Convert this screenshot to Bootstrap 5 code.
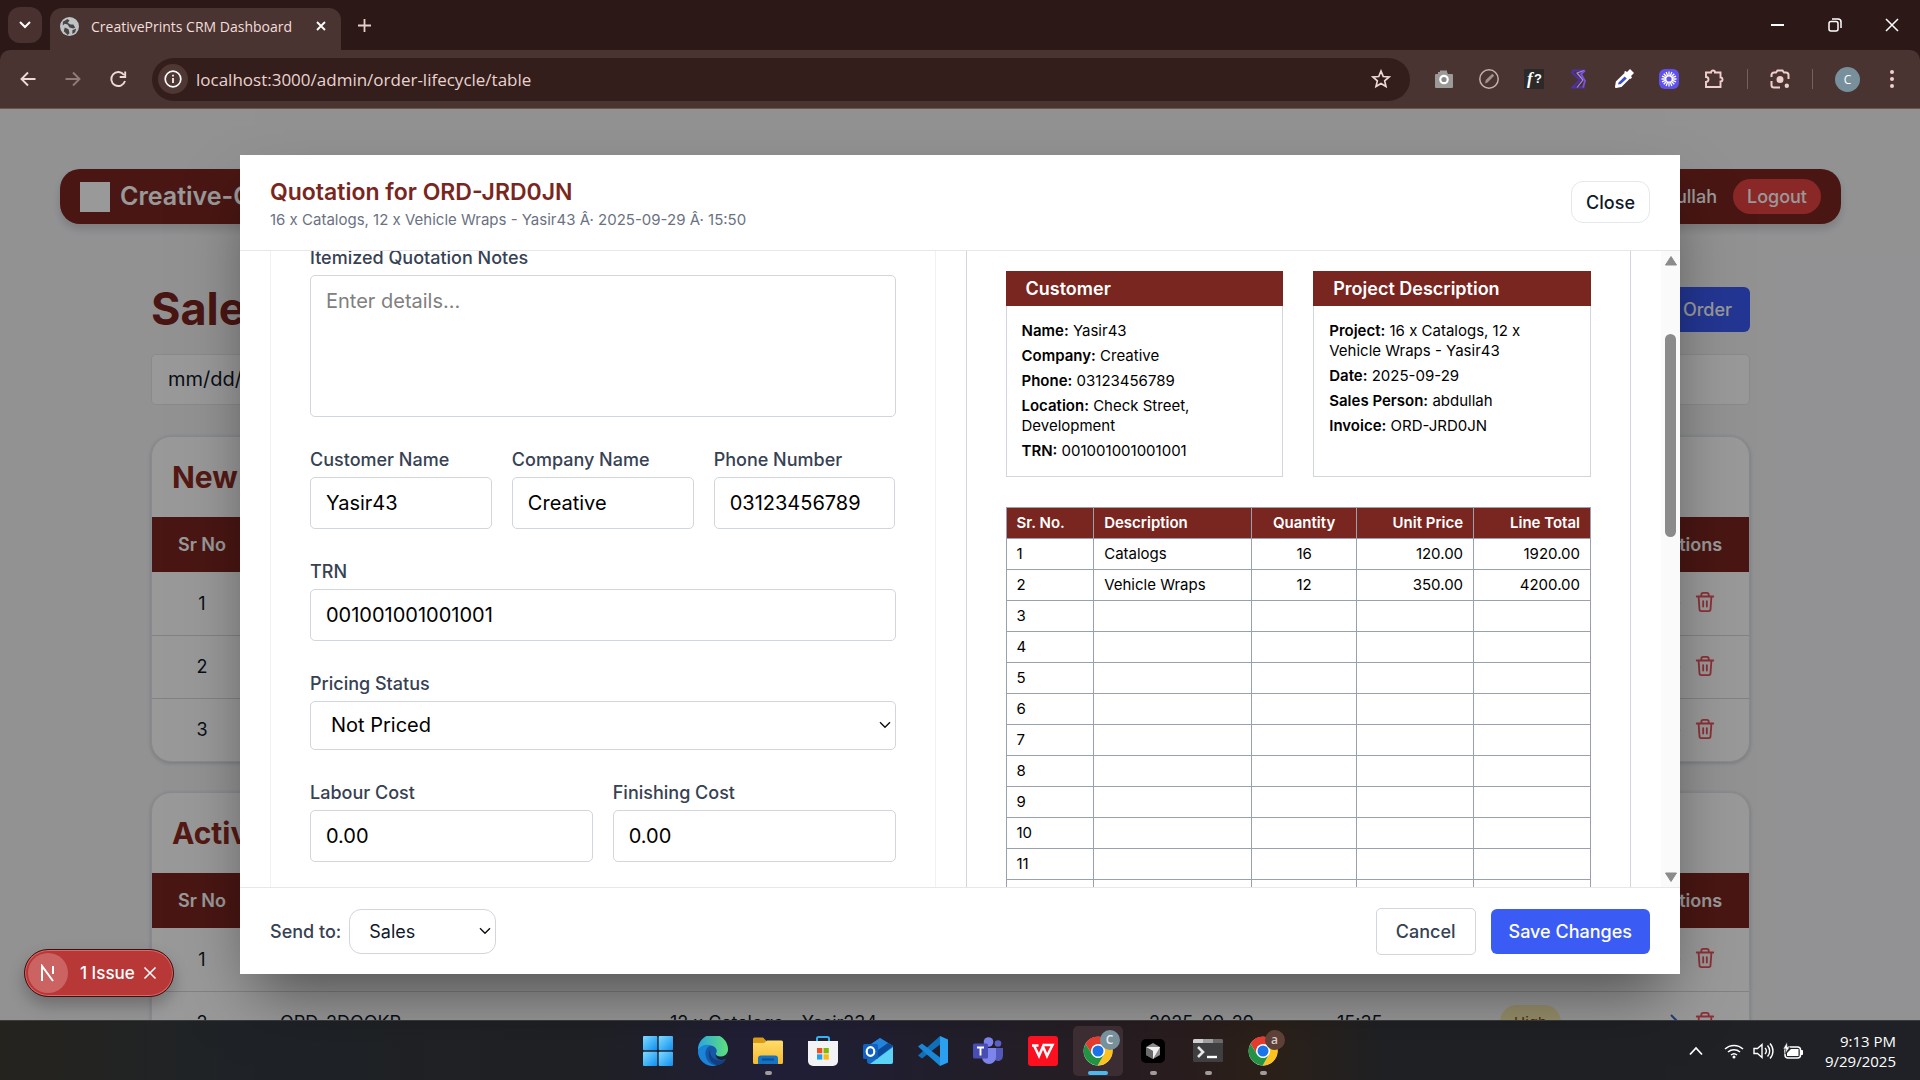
<!DOCTYPE html>
<html lang="en">
<head>
<meta charset="utf-8">
<meta name="viewport" content="width=device-width, initial-scale=1">
<title>CreativePrints CRM Dashboard</title>
<link href="https://cdn.jsdelivr.net/npm/bootstrap@5.3.0/dist/css/bootstrap.min.css" rel="stylesheet">
<style>
:root{--brand:#7a2620;--blue:#3b5bf5;--ui:"Open Sans","Noto Sans",sans-serif}
html,body{height:100%}
body{font-family:Inter,"Liberation Sans",sans-serif;font-size:18px;line-height:25px;color:#101828;overflow:hidden;background:#202124}
button,input,select,textarea{font-family:inherit}
svg{display:block;flex:none}
/* browser window */
.chrome{font-family:var(--ui);color:#f3dedb;background:#2c1817;flex:none}
.strip{height:50px;padding-left:8px}
.tablist-btn{width:34px;height:36px;border-radius:12px;background:#48312f;border:0;color:#fff;margin-right:8px;place-items:center}
.tab-item{width:291px;height:42px;border-radius:12px 12px 0 0;background:#4a3431;font-size:14px;padding:0 15px 6px 10px}
.bare{border:0;background:none;padding:0;color:inherit}
.win-btn{width:57px;height:50px;display:grid;place-items:center;color:#fff}
.toolbar{height:59px;background:#4a3431;border-bottom:1px solid #6b5350;border-radius:10px 10px 0 0;padding:0 20px 0 18px}
.nav-set{gap:25px}
.ext-set{gap:25px}
.side-set{gap:22px;margin:0 20px 0 23px}
.omni{height:43px;border-radius:22px;background:#341e1b;padding:0 19px 0 6px}
.omni input{border:0;background:none;color:#e9d3d0;font-size:17px;outline:0;min-width:0;padding:0}
.info-dot{width:30px;height:30px;border-radius:50%;background:#4f3734;place-items:center}
.vbar{width:1px;height:20px;background:#7a605c}
.avatar-c{width:25px;height:25px;border-radius:50%;background:#78909c;font-size:12px;line-height:25px;text-align:center;color:#fff}
/* dashboard */
.viewport{min-height:0;background:#f3f4f6;overflow:hidden;padding:60px 79px 0 60px}
.brandbar{height:55px;border-radius:20px;background:var(--brand);color:#fff;padding:0 20px;box-shadow:0 5px 8px rgba(0,0,0,.15);margin-bottom:60px}
.logo-box{width:30px;height:30px;background:#fff;margin-right:10px}
.brand-name{font-size:25px;font-weight:600}
.logout{height:35px;border:0;border-radius:18px;background:#e64242;color:#fff;font-size:18px;font-weight:500;padding:0 14px}
.board{padding:0 91px}
.board h1{font-size:45px;line-height:50px;font-weight:700;color:var(--brand);margin:0}
.title-row{margin-bottom:20px}
.filter-row{gap:20px;margin-bottom:31px}
.btn-blue{background:var(--blue);color:#fff;border:0;border-radius:6px;height:45px;padding:0 18px;font-weight:500;font-size:18px}
.filter{flex:1 1 0;height:51px;border:1px solid #e5e7eb;border-radius:5px;background:#fff;font-size:20px;padding:0 16px;color:#101828}
.list-card{background:#fff;border-radius:20px;border:1px solid #e5e7eb;box-shadow:0 1px 4px rgba(16,24,40,.2);overflow:hidden;margin-bottom:30px}
.list-card h2{font-size:30px;line-height:40px;font-weight:700;color:#8d2a22;margin:0;padding:20px}
.grid-t{width:100%;table-layout:fixed}
.grid-t th{height:55px;background:var(--brand);color:#fff;font-weight:600;text-align:left;padding:0 28px}
.grid-t td{height:63px;border-bottom:1px solid #d6d9df;padding:0 28px}
.grid-t tr:last-child td{border-bottom:0}
.grid-t .mid{text-align:center;padding:0}
.c1{width:100px}.c2{width:390px}.c3{width:479px}.c4{width:188px}.c5{width:163px}.c7{width:120px}
.prio{display:inline-block;background:#fef0b5;color:#894b00;border-radius:17px;padding:5px 14px;font-size:15px}
/* quotation dialog */
.shade{position:absolute;top:109px;right:0;bottom:60px;left:0;background:rgba(0,0,0,.4)}
.dialog{width:75%;height:90%;background:#fff;box-shadow:0 31px 62px -15px rgba(0,0,0,.5)}
.dlg-head{flex:none;padding:20px 30px;border-bottom:1px solid #e5e7eb}
.dlg-head h3{font-size:23px;line-height:35px;font-weight:600;color:var(--brand);margin:0}
.dlg-head p{font-size:15px;line-height:20px;color:#6a7282;margin:0}
.btn-line{height:42px;background:#fff;border:1px solid #e5e7eb;border-radius:12px;padding:0 14px;font-weight:500;color:#101828}
.dlg-body{min-height:0}
.scroll-area{overflow:hidden;padding:30px;min-width:0}
.pane{border:1px solid #f0f1f3;padding:39px;min-width:0}
.preview{border-color:#d1d5dc}
.pair{gap:30px}
.field label,.send label{font-weight:500;color:#364153;font-size:18px}
.field label{display:block;margin-bottom:5px}
.field{margin-bottom:30px}
.ctl{display:block;width:100%;height:52px;border:1px solid #d1d5dc;border-radius:5px;padding:0 15px;font-size:20px;color:#000;background:#fff}
textarea.ctl{height:142px;padding:10px 15px;line-height:30px;resize:none}
textarea.ctl::placeholder{color:#808080}
.picker{appearance:none;background:#fff url("data:image/svg+xml,%3Csvg xmlns='http://www.w3.org/2000/svg' width='12' height='8' fill='none' stroke='%23111' stroke-width='1.4'%3E%3Cpath d='M1 1.2l5 5 5-5'/%3E%3C/svg%3E") no-repeat right 4px center}
select.ctl{height:49px;padding:0 20px}
.trio{gap:20px}
.trio>*{flex:1 1 0;min-width:0}
.form-top{height:114px}
.quote-head{height:140px}
.info-box{flex:1 1 0;border:1px solid #d1d5dc;font-size:15px;line-height:20px;color:#000}
.info-box h4{background:var(--brand);color:#fff;font-size:18px;line-height:35px;font-weight:600;margin:-1px -1px 0;padding:0 20px}
.info-box div{padding:15px}
.info-box p{margin:0 0 5px}
.info-box p:last-child{margin:0}
.info-box b,.lines th{font-weight:600}
.lines{width:100%;table-layout:fixed;border-collapse:collapse;font-size:15px;line-height:20px;color:#000;margin-top:30px}
.lines th,.lines td{border:1px solid #99a1af;padding:5px 10px;height:31px}
.lines th{background:var(--brand);color:#fff}
.sbar{flex:none;width:19px;background:#fafafa;padding:4px 0;color:#8b8b8b}
.thumb{width:11px;height:203px;border-radius:6px;background:#8b8b8b;margin-top:67px}
.dlg-foot{flex:none;height:87px;border-top:1px solid #e5e7eb;padding:0 30px}
.send select{width:147px;height:45px;border:1px solid #d1d5dc;border-radius:12px;padding:0 19px;font-size:18px;color:#101828}
.btn-cancel{height:47px;border-radius:5px;border-color:#d1d5dc;padding:0 19px;color:#364153;margin-right:15px}
/* dev overlay */
.issue{position:absolute;left:24px;bottom:83px;height:48px;width:150px;border-radius:24px;background:#b83737;border:1px solid #3a1212;box-shadow:inset 0 0 0 1px #d66,0 8px 16px rgba(0,0,0,.25);color:#fff;font-size:17px;font-weight:500;padding:0 16px 0 3px}
.n-dot{width:40px;height:40px;border-radius:50%;background:#cb6363;place-items:center}
/* taskbar */
.taskbar{flex:none;height:60px;font-family:var(--ui);color:#fff;background:linear-gradient(90deg,#25231e 0,#1f2327 12%,#202124 30%,#201f38 40%,#221f2b 50%,#2a1d1e 62%,#2c2119 66%,#202124 72%,#202126 100%);border-top:1px solid #3a3a3c}
.apps{gap:5px}
.app{width:50px;height:50px;border:0;background:none;border-radius:5px;position:relative;display:grid;place-items:center;padding:0}
.app.on{background:#3c2d33}
.app.run::after{content:"";position:absolute;bottom:1px;left:50%;width:7px;height:4px;margin-left:-3px;border-radius:2px;background:#a09c9c}
.app.on::after{width:20px;margin-left:-10px;background:#4cb8f0}
.who{position:absolute;top:4px;right:3px;width:20px;height:20px;border-radius:50%;background:#78909c;color:#e8edf0;font-size:12px;line-height:20px;font-weight:600;text-align:center}
.who.brown{background:#5d4037;color:#d7ccc8}
.tray{font-size:15px;line-height:20px;width:240px;padding:0 24px 0 9px;gap:9px}
</style>
<script src="https://cdn.jsdelivr.net/npm/bootstrap@5.3.0/dist/js/bootstrap.bundle.min.js"></script>
</head>
<body class="d-flex flex-column position-relative">
<svg width="0" height="0" class="position-absolute">
<defs>
<symbol id="trash" viewBox="0 0 24 24"><path d="M3 6h18M5 6l1 14a2 2 0 0 0 2 2h8a2 2 0 0 0 2-2l1-14M8 6V4a2 2 0 0 1 2-2h4a2 2 0 0 1 2 2v2M10 11v6M14 11v6" fill="none" stroke="#e8505a" stroke-width="2" stroke-linecap="round" stroke-linejoin="round"/></symbol>
<symbol id="go" viewBox="0 0 24 24"><path d="M9 4l8 8-8 8" fill="none" stroke="#3467c8" stroke-width="2"/></symbol>
<symbol id="chrome" viewBox="0 0 48 48"><circle cx="24" cy="24" r="23" fill="#fff"/><path d="M24 13h20.600A23 23 0 0 0 4.100 12.500L14.500 29.500A11 11 0 0 1 24 13z" fill="#e33b2e"/><path d="M33.500 29.500L23.500 47A23 23 0 0 0 44.600 13H24a11 11 0 0 1 9.500 16.500z" fill="#fcc31e"/><path d="M14.500 29.500L4.100 12.500A23 23 0 0 0 23.500 47l10-17.500a11 11 0 0 1-19 0z" fill="#229342"/><circle cx="24" cy="24" r="10.800" fill="#fff"/><circle cx="24" cy="24" r="8.800" fill="#1a73e8"/></symbol>
<linearGradient id="gWin" x1="0" y1="0" x2="1" y2="1"><stop offset="0" stop-color="#7fdcff"/><stop offset="1" stop-color="#0f8ef0"/></linearGradient>
<linearGradient id="gEdge" x1="0" y1="0" x2="1" y2="0"><stop offset="0" stop-color="#2aa5e0"/><stop offset="1" stop-color="#5fe07a"/></linearGradient>
<linearGradient id="gFold" x1="0" y1="0" x2="0" y2="1"><stop offset="0" stop-color="#ffdc6a"/><stop offset="1" stop-color="#f5b92c"/></linearGradient>
</defs>
</svg>

<header class="chrome">
  <div class="strip d-flex align-items-center">
    <button class="tablist-btn d-grid" aria-label="Search tabs"><svg width="12" height="8" fill="none" stroke="currentColor" stroke-width="2"><path d="M1 1l5 5 5-5"/></svg></button>
    <div class="tab-item d-flex align-items-center align-self-end gap-2">
      <svg width="19" height="19" viewBox="0 0 20 20"><circle cx="10" cy="10" r="10" fill="#bfc3c6"/><path d="M3 5l5-3 2 2-2 2 3 2 3 0 2 3-2 1-4-1-2-3-3-1-2 2zM5 11l4 2 1 4-2 2-4-4zM13 14l4-2-1 4-3 2z" fill="#4a4545"/></svg>
      <span class="flex-grow-1 text-nowrap ms-1">CreativePrints CRM Dashboard</span>
      <button class="bare" aria-label="Close tab"><svg width="10" height="10" stroke="#fff" stroke-width="1.800"><path d="M1 1l8 8M9 1l-8 8"/></svg></button>
    </div>
    <button class="bare ms-3" aria-label="New tab"><svg width="15" height="15" stroke="#e8cfcb" stroke-width="1.800"><path d="M7.500 1v13M1 7.500h13"/></svg></button>
    <div class="d-flex ms-auto">
      <button class="bare win-btn" aria-label="Minimise"><svg width="13" height="2" stroke="#fff" stroke-width="2"><path d="M0 1h13"/></svg></button>
      <button class="bare win-btn" aria-label="Restore"><svg width="14" height="14" fill="none" stroke="#fff" stroke-width="1.500"><rect x="1" y="3.500" width="9" height="9.500" rx="2"/><path d="M4 1h6a3 3 0 0 1 3 3v6"/></svg></button>
      <button class="bare win-btn" aria-label="Close window"><svg width="14" height="14" stroke="#fff" stroke-width="1.500"><path d="M1 1l12 12M13 1L1 13"/></svg></button>
    </div>
  </div>
  <div class="toolbar d-flex align-items-center">
    <div class="nav-set d-flex align-items-center">
      <button class="bare" aria-label="Back"><svg width="20" height="20" fill="none" stroke="#f0d8d4" stroke-width="1.900"><path d="M17.500 10H3.500M10 3.500L3.500 10l6.500 6.500"/></svg></button>
      <button class="bare" aria-label="Forward"><svg width="20" height="20" fill="none" stroke="#927a77" stroke-width="1.900"><path d="M2.500 10h14M10 3.500l6.500 6.500-6.500 6.500"/></svg></button>
      <button class="bare" aria-label="Reload"><svg width="20" height="20" fill="none" stroke="#f0d8d4" stroke-width="1.900"><path d="M16 6a7 7 0 1 0 1 6M17.200 2.500v5.500h-5.500"/></svg></button>
    </div>
    <div class="omni d-flex align-items-center flex-grow-1 ms-4 me-4 gap-2">
      <span class="info-dot d-grid"><svg width="18" height="18" fill="none" stroke="#fff" stroke-width="1.700"><circle cx="9" cy="9" r="7.800"/><path d="M9 8v5M9 4.800v1.800"/></svg></span>
      <input class="flex-grow-1" aria-label="Address" value="localhost:3000/admin/order-lifecycle/table">
      <svg width="20" height="20" viewBox="0 0 24 24" fill="none" stroke="#f0d8d4" stroke-width="2"><path d="M12 2.500l2.700 6.500 7 .6-5.300 4.600 1.600 6.900-6-3.700-6 3.700 1.600-6.900L2.300 9.600l7-.6z"/></svg>
    </div>
    <div class="ext-set d-flex align-items-center">
      <svg width="20" height="20"><path d="M2 5h2V3h2V1.500h7V3l1 2h4a1 1 0 0 1 1 1v12a1 1 0 0 1-1 1H2a1 1 0 0 1-1-1V6a1 1 0 0 1 1-1z" fill="#9c9a99"/><circle cx="10" cy="10.500" r="3.700" fill="#8a8888" stroke="#fff" stroke-width="2.200"/></svg>
      <svg width="20" height="20" fill="none" stroke="#c2b0ad"><circle cx="10" cy="10" r="9.200" stroke-width="1.500"/><path d="M6 14.500l.8-3.500 6.500-6.200 1.900 2-6.700 6.700z" fill="#9f9290" stroke="none"/></svg>
      <svg width="20" height="20"><rect width="20" height="20" rx="1" fill="#2b2929"/><text x="3" y="15" font-size="17" font-weight="700" font-style="italic" font-family="Liberation Serif" fill="#fff">f</text><text x="10" y="14" font-size="13" font-weight="700" font-family="Liberation Sans" fill="#fff">?</text></svg>
      <svg width="20" height="20" fill="none" stroke-linejoin="round"><path d="M16 1.500H4l-1 2 8 7.500L7 15l-4 3.500h13" stroke="#4f31a8" stroke-width="2"/><path d="M15 1.500L8 4l6 7-6 7.500" stroke="#a98df0" stroke-width="1.200"/><path d="M16 1.500l-4 3.500 4 7-2 6.500" stroke="#7a54e0" stroke-width="1.800"/></svg>
      <svg width="20" height="20"><path d="M2 18l.8-5 8.700-8.500 4 4L7 17z" fill="#fff" stroke="#fff" stroke-width="2" stroke-linejoin="round"/><path d="M4 15.500l.6-2 6-6 2.200 2-6 5.600z" fill="#3c50c0"/><path d="M10 3l1.500-1 1.500 1 3-3 4 4-3 3 1 1.500-1.500 1.500z" fill="#fff"/></svg>
      <svg width="20" height="20"><rect width="20" height="20" rx="6" fill="#5f52ea"/><g stroke="#fff" stroke-width="1.300"><path d="M10 2.500v15M2.500 10h15M4.700 4.700l10.600 10.600M15.300 4.700L4.700 15.300M7.100 3l5.800 14M12.900 3L7.100 17M3 7.100l14 5.800M3 12.900l14-5.800"/></g><circle cx="10" cy="10" r="2.600" fill="#5f52ea"/></svg>
      <svg width="20" height="20" viewBox="0 0 20 20" fill="none" stroke="#f0d0cc" stroke-width="1.900"><path d="M2 3.500h5a2 2 0 0 1 4 0h5.500v5a2 2 0 0 1 0 4V18H2v-5a2.500 2.500 0 0 0 0-5z"/></svg>
    </div>
    <div class="side-set d-flex align-items-center">
      <span class="vbar"></span>
      <svg width="20" height="20" fill="none" stroke="#f0d0cc" stroke-width="2"><path d="M1.500 8V6a2.500 2.500 0 0 1 2.500-2.500h2L7.500 1.500h5L14 3.500h2A2.500 2.500 0 0 1 18.500 6v4M1.500 12v4A2.500 2.500 0 0 0 4 18.500h6"/><circle cx="10" cy="10.500" r="2.500" fill="#f0d0cc"/><circle cx="16.800" cy="16.800" r="1.200" fill="#f0d0cc"/></svg>
      <span class="vbar"></span>
      <span class="avatar-c">C</span>
    </div>
    <button class="bare" aria-label="Menu"><svg width="20" height="20" fill="#f0d0cc"><circle cx="12" cy="3" r="2"/><circle cx="12" cy="10" r="2"/><circle cx="12" cy="17" r="2"/></svg></button>
  </div>
</header>

<main class="viewport flex-grow-1">
  <nav class="brandbar d-flex align-items-center">
    <span class="logo-box"></span><span class="brand-name">Creative-Connect</span>
    <span class="ms-auto me-3 fw-medium">abdullah</span><button class="logout">Logout</button>
  </nav>
  <div class="board">
    <div class="title-row d-flex justify-content-between align-items-center"><h1>Sales</h1><button class="btn-blue">New Order</button></div>
    <div class="filter-row d-flex"><input type="date" class="filter" aria-label="From date"><input class="filter" aria-label="Search"></div>
    <section class="list-card">
      <h2>New Orders</h2>
      <table class="grid-t">
        <colgroup><col class="c1"><col class="c2"><col class="c3"><col class="c4"><col class="c5"><col><col class="c7"></colgroup>
        <thead><tr><th class="mid">Sr No</th><th></th><th></th><th></th><th></th><th></th><th class="mid">Actions</th></tr></thead>
        <tbody>
        <tr><td class="mid">1</td><td></td><td></td><td></td><td></td><td></td><td><div class="d-flex justify-content-center gap-2"><svg width="24" height="24"><use href="#go"/></svg><svg width="22" height="22"><use href="#trash"/></svg></div></td></tr>
        <tr><td class="mid">2</td><td></td><td></td><td></td><td></td><td></td><td><div class="d-flex justify-content-center gap-2"><svg width="24" height="24"><use href="#go"/></svg><svg width="22" height="22"><use href="#trash"/></svg></div></td></tr>
        <tr><td class="mid">3</td><td></td><td></td><td></td><td></td><td></td><td><div class="d-flex justify-content-center gap-2"><svg width="24" height="24"><use href="#go"/></svg><svg width="22" height="22"><use href="#trash"/></svg></div></td></tr>
        </tbody>
      </table>
    </section>
    <section class="list-card">
      <h2>Active Orders</h2>
      <table class="grid-t">
        <colgroup><col class="c1"><col class="c2"><col class="c3"><col class="c4"><col class="c5"><col><col class="c7"></colgroup>
        <thead><tr><th class="mid">Sr No</th><th></th><th></th><th></th><th></th><th></th><th class="mid">Actions</th></tr></thead>
        <tbody>
        <tr><td class="mid">1</td><td></td><td></td><td></td><td></td><td></td><td><div class="d-flex justify-content-center gap-2"><svg width="24" height="24"><use href="#go"/></svg><svg width="22" height="22"><use href="#trash"/></svg></div></td></tr>
        <tr><td class="mid">2</td><td>ORD-2DOOKR</td><td>12 x Catalogs - Yasir234</td><td>2025-09-29</td><td>15:35</td><td><span class="prio">High</span></td><td><div class="d-flex justify-content-center gap-2"><svg width="24" height="24"><use href="#go"/></svg><svg width="22" height="22"><use href="#trash"/></svg></div></td></tr>
        </tbody>
      </table>
    </section>
  </div>
</main>

<div class="shade d-flex align-items-center justify-content-center">
  <section class="dialog d-flex flex-column" role="dialog" aria-label="Quotation">
    <header class="dlg-head d-flex align-items-center justify-content-between">
      <div><h3>Quotation for ORD-JRD0JN</h3><p>16 x Catalogs, 12 x Vehicle Wraps - Yasir43 Â· 2025-09-29 Â· 15:50</p></div>
      <button class="btn-line">Close</button>
    </header>
    <div class="dlg-body d-flex flex-grow-1">
      <div class="scroll-area flex-grow-1" id="scroller">
        <div class="pair d-flex">
          <form class="pane w-50">
            <div class="form-top"></div>
            <div class="field"><label for="notes">Itemized Quotation Notes</label><textarea class="ctl" id="notes" placeholder="Enter details..."></textarea></div>
            <div class="trio d-flex">
              <div class="field"><label for="cust">Customer Name</label><input class="ctl" id="cust" value="Yasir43"></div>
              <div class="field"><label for="comp">Company Name</label><input class="ctl" id="comp" value="Creative"></div>
              <div class="field"><label for="phone">Phone Number</label><input class="ctl" id="phone" value="03123456789"></div>
            </div>
            <div class="field"><label for="trn">TRN</label><input class="ctl" id="trn" value="001001001001001"></div>
            <div class="field"><label for="pstat">Pricing Status</label><select class="ctl picker" id="pstat"><option>Not Priced</option></select></div>
            <div class="trio d-flex">
              <div class="field"><label for="lab">Labour Cost</label><input class="ctl" id="lab" value="0.00"></div>
              <div class="field"><label for="fin">Finishing Cost</label><input class="ctl" id="fin" value="0.00"></div>
            </div>
          </form>
          <div class="pane preview w-50">
            <div class="quote-head"></div>
            <div class="pair d-flex">
              <div class="info-box"><h4>Customer</h4><div>
                <p><b>Name:</b> Yasir43</p><p><b>Company:</b> Creative</p><p><b>Phone:</b> 03123456789</p><p><b>Location:</b> Check Street, Development</p><p><b>TRN:</b> 001001001001001</p></div></div>
              <div class="info-box"><h4>Project Description</h4><div>
                <p><b>Project:</b> 16 x Catalogs, 12 x Vehicle Wraps - Yasir43</p><p><b>Date:</b> 2025-09-29</p><p><b>Sales Person:</b> abdullah</p><p><b>Invoice:</b> ORD-JRD0JN</p></div></div>
            </div>
            <table class="lines">
              <colgroup><col style="width:15%"><col style="width:27%"><col style="width:18%"><col style="width:20%"><col style="width:20%"></colgroup>
              <thead><tr><th>Sr. No.</th><th>Description</th><th class="text-center">Quantity</th><th class="text-end">Unit Price</th><th class="text-end">Line Total</th></tr></thead>
              <tbody>
              <tr><td>1</td><td>Catalogs</td><td class="text-center">16</td><td class="text-end">120.00</td><td class="text-end">1920.00</td></tr>
              <tr><td>2</td><td>Vehicle Wraps</td><td class="text-center">12</td><td class="text-end">350.00</td><td class="text-end">4200.00</td></tr>
              <tr><td>3</td><td></td><td></td><td></td><td></td></tr>
              <tr><td>4</td><td></td><td></td><td></td><td></td></tr>
              <tr><td>5</td><td></td><td></td><td></td><td></td></tr>
              <tr><td>6</td><td></td><td></td><td></td><td></td></tr>
              <tr><td>7</td><td></td><td></td><td></td><td></td></tr>
              <tr><td>8</td><td></td><td></td><td></td><td></td></tr>
              <tr><td>9</td><td></td><td></td><td></td><td></td></tr>
              <tr><td>10</td><td></td><td></td><td></td><td></td></tr>
              <tr><td>11</td><td></td><td></td><td></td><td></td></tr>
              <tr><td>12</td><td></td><td></td><td></td><td></td></tr>
              <tr><td>13</td><td></td><td></td><td></td><td></td></tr>
              <tr><td>14</td><td></td><td></td><td></td><td></td></tr>
              <tr><td>15</td><td></td><td></td><td></td><td></td></tr>
              <tr><td>16</td><td></td><td></td><td></td><td></td></tr>
              </tbody>
            </table>
          </div>
        </div>
      </div>
      <div class="sbar d-flex flex-column align-items-center">
        <svg width="12" height="12" fill="currentColor"><path d="M6 1.500L11.500 10h-11z" stroke="currentColor" stroke-linejoin="round"/></svg>
        <span class="thumb"></span>
        <svg class="mt-auto" width="12" height="12" fill="currentColor"><path d="M6 10.500L.5 2h11z" stroke="currentColor" stroke-linejoin="round"/></svg>
      </div>
    </div>
    <footer class="dlg-foot d-flex align-items-center">
      <div class="send d-flex align-items-center"><label for="send" class="me-2">Send to:</label><select id="send" class="picker"><option>Sales</option></select></div>
      <button type="button" class="btn-line btn-cancel ms-auto">Cancel</button><button type="button" class="btn-blue">Save Changes</button>
    </footer>
  </section>
</div>

<div class="issue d-flex align-items-center">
  <span class="n-dot d-grid me-2"><svg width="18" height="18" fill="none" stroke="#fff" stroke-width="2"><path d="M3 17V2l11 15" /><path d="M14 2v8"/></svg></span>
  <span class="ms-1 text-nowrap">1 Issue</span>
  <button class="bare ms-auto" aria-label="Dismiss"><svg width="14" height="14" stroke="#fff" stroke-width="1.500"><path d="M1.500 1.500l11 11M12.500 1.500l-11 11"/></svg></button>
</div>

<footer class="taskbar d-flex align-items-center">
  <div class="tray"></div>
  <div class="apps d-flex flex-grow-1 justify-content-center">
    <button class="app" aria-label="Start"><svg width="30" height="30" fill="url(#gWin)"><rect width="14.300" height="14.300" rx="1"/><rect x="15.700" width="14.300" height="14.300" rx="1"/><rect y="15.700" width="14.300" height="14.300" rx="1"/><rect x="15.700" y="15.700" width="14.300" height="14.300" rx="1"/></svg></button>
    <button class="app" aria-label="Edge"><svg width="30" height="30"><circle cx="15" cy="15" r="15" fill="#1558a8"/><path d="M0 14A15 15 0 0 1 30 13c0 5-3 7.500-7 7.500-3.500 0-5.500-1.500-5-3 1-1.500 1-3.500 0-5-3-4-12-5-18 1.500z" fill="url(#gEdge)"/><path d="M0 14c3-5 9-6.500 13-4.500-4 1-6 5-5.500 9.500.6 5 4 9.500 10.500 10.700A15 15 0 0 1 0 14z" fill="#1a84d8"/><path d="M12.500 13c-2 6 3 12 11 11.500 2 0 4-1 4.500-1-1 2-4 4.500-7 5.500-8 .5-13-10-8.500-16z" fill="#123f82"/><path d="M18 17.500c-.5 2 2 3.500 5 3.300 3-.2 6-2 7-5.500 0 3-.5 5-1.500 7.200-5 3-12 1-10.500-5z" fill="#202130"/></svg></button>
    <button class="app run" aria-label="File Explorer"><svg width="30" height="28"><path d="M0 2a1.500 1.500 0 0 1 1.500-1.500H10L13 3.500V10H0z" fill="#d99a16"/><path d="M0 6h11l3-2.500h14.500A1.500 1.500 0 0 1 30 5v20.500a1.500 1.500 0 0 1-1.500 1.500h-27A1.500 1.500 0 0 1 0 25.500z" fill="url(#gFold)"/><path d="M5 27v-5.500A3 3 0 0 1 8 18.500h14a3 3 0 0 1 3 3V27z" fill="#1473c4"/><path d="M9 22.500h12" stroke="#0b4f92" stroke-width="2"/></svg></button>
    <button class="app" aria-label="Store"><svg width="30" height="30"><path d="M9 6V2.500A1.500 1.500 0 0 1 10.500 1h9A1.500 1.500 0 0 1 21 2.500V6" fill="none" stroke="#35b0f0" stroke-width="2"/><path d="M0 5h30v20a5 5 0 0 1-5 5H5a5 5 0 0 1-5-5z" fill="#f3f3f5"/><path d="M9 12h5.300v5.300H9z" fill="#f04f24"/><path d="M15.500 12h5.300v5.300h-5.300z" fill="#7fba00"/><path d="M9 18.300h5.300v5.300H9z" fill="#1ea0ee"/><path d="M15.500 18.300h5.300v5.300h-5.300z" fill="#fcb813"/></svg></button>
    <button class="app" aria-label="Outlook"><svg width="30" height="28"><path d="M4 10L17 1l13 8v16a2 2 0 0 1-2 2H7a3 3 0 0 1-3-3z" fill="#1569c0"/><path d="M17 1l13 8-14 9-8-11z" fill="#2484dc"/><path d="M12 15L25 6l5 3-16 12z" fill="#0d4a9a"/><path d="M30 10v15a2 2 0 0 1-2 2H7z" fill="#5cd2f5"/><rect y="7" width="15" height="15" rx="1.500" fill="#0f60c0"/><ellipse cx="7.500" cy="14.500" rx="3.800" ry="4.300" fill="none" stroke="#fff" stroke-width="2.200"/></svg></button>
    <button class="app" aria-label="VS Code"><svg width="30" height="30"><path d="M22 0l8 3.500v23L22 30z" fill="#2ba0f0"/><path d="M22 0v8.500L4 22.500 0 19.500z" fill="#0f6fb8"/><path d="M22 30v-8.500L4 7.500 0 10.500z" fill="#1a86d6"/></svg></button>
    <button class="app" aria-label="Teams"><svg width="30" height="28"><circle cx="25" cy="6.500" r="3.300" fill="#5b60c8"/><path d="M20 11h10v8a5 5 0 0 1-8 4z" fill="#5358bb"/><circle cx="15.500" cy="5" r="4.800" fill="#7b83eb"/><path d="M9 11h14v9a7 7 0 0 1-14 0z" fill="#7d84ea"/><rect y="6.500" width="15" height="15" rx="1.500" fill="#474db5"/><path d="M4 10.500h7M7.500 10.500v8" stroke="#fff" stroke-width="1.900"/></svg></button>
    <button class="app" aria-label="WPS Office"><svg width="30" height="30"><rect width="30" height="30" rx="3" fill="#fb1020"/><path d="M4 9.500h6.500M6 9.500l5 10.500 4-9.500 4 9.500 5.500-11H15" fill="none" stroke="#fff" stroke-width="2.500"/></svg></button>
    <button class="app run on" aria-label="Chrome"><svg width="30" height="30"><use href="#chrome"/></svg><span class="who">C</span></button>
    <button class="app run" aria-label="Cursor"><svg width="24" height="24"><rect width="24" height="24" rx="5" fill="#000"/><path d="M12 4l7 4v8l-7 4-7-4V8z" fill="#8b8b8b"/><path d="M5 8l14 0-7 4z" fill="#c9c9c9"/><path d="M19 8l-7 12v-8L5 8z" fill="#f2f2f2"/><path d="M5 8l7 4v8l-7-4z" fill="#6b6b6b"/></svg></button>
    <button class="app run" aria-label="Terminal"><svg width="30" height="23"><rect width="30" height="23" rx="1.500" fill="#3f3f41"/><path d="M0 4V1.500A1.500 1.500 0 0 1 1.500 0H10v4z" fill="#d0d0d0"/><path d="M10 0h10v4H10z" fill="#a0a0a0"/><path d="M20 0h8.500A1.500 1.500 0 0 1 30 1.500V4H20z" fill="#6a6a6a"/><path d="M5 8l5 5-5 5" fill="none" stroke="#e6e6e6" stroke-width="2.600"/><path d="M14 18h10" stroke="#fff" stroke-width="2.400"/></svg></button>
    <button class="app run" aria-label="Chrome, second profile"><svg width="30" height="30"><use href="#chrome"/></svg><span class="who brown">a</span></button>
  </div>
  <div class="tray d-flex align-items-center">
    <svg class="me-2" width="14" height="10" fill="none" stroke="#fff" stroke-width="1.800"><path d="M1 8.500l6-6.500 6 6.500"/></svg>
    <svg class="ms-1" width="20" height="16" fill="none" stroke="#fff" stroke-width="1.500"><path d="M1 6a13 13 0 0 1 18 0M4 9a9 9 0 0 1 12 0M7 12a4.500 4.500 0 0 1 6 0"/><circle cx="10" cy="14" r="1.500" fill="#fff" stroke="none"/></svg>
    <svg width="21" height="18" fill="none" stroke="#fff" stroke-width="1.400"><path d="M1 6.500h3.500L9 2.500v13L4.500 11.500H1zM12 6a4 4 0 0 1 0 6M14.500 3.500a8 8 0 0 1 0 11M17 1.500a11 11 0 0 1 0 15"/></svg>
    <svg width="21" height="18"><rect x="2" y="5" width="15.500" height="11" rx="3" fill="none" stroke="#fff" stroke-width="1.500"/><path d="M18 8.500h1.500v4H18z" fill="#fff" stroke="#fff"/><path d="M8 7h7.500v7H4v-3z" fill="#fff"/><path d="M4 0L0 7h3l-1 5 5-7H4.500z" fill="#fff" stroke="#202124" stroke-width=".6"/></svg>
    <div class="ms-auto text-end text-nowrap">9:13 PM<br>9/29/2025</div>
  </div>
</footer>
<script>
document.getElementById('scroller').scrollTop = 190;
</script>
</body>
</html>
